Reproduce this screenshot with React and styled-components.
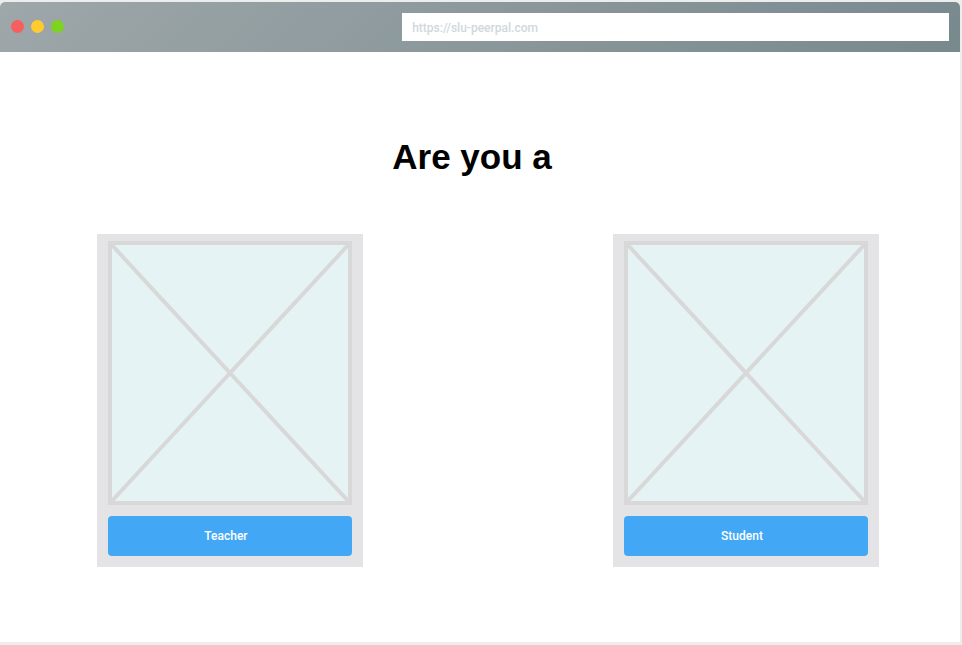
import React from "react";
import styled, { createGlobalStyle } from "styled-components";

const GlobalStyle = createGlobalStyle`
  *, *::before, *::after { box-sizing: border-box; }
  body { margin: 0; background: #ededee; font-family: "Liberation Sans", Arial, sans-serif; }
`;

const Frame = styled.div`
  min-height: 100vh;
  display: flex;
  padding: 2px 2px 3px 0;
`;

const BrowserWindow = styled.div`
  flex: 1;
  min-width: 0;
  display: flex;
  flex-direction: column;
  background: #fff;
  border-radius: 5px 5px 0 0;
  overflow: hidden;
`;

const TitleBar = styled.header`
  height: 50px;
  display: flex;
  align-items: center;
  justify-content: space-between;
  padding: 0 11px;
  background: linear-gradient(135deg, #9ea7aa, #78898d);
`;

const Lights = styled.div`
  display: flex;
  gap: 7px;
  padding-bottom: 1px;
`;

const Light = styled.span`
  width: 13px;
  height: 13px;
  border-radius: 50%;
  background: ${(p) => p.$color};
`;

const AddressInput = styled.input`
  width: calc(60% - 16px);
  height: 28px;
  padding: 2px 10px 0;
  border: 0;
  border-radius: 0;
  outline: 0;
  background: #fff;
  color: #cfd8dc;
  font: 500 12px/20px Roboto, sans-serif;
`;

const Main = styled.main`
  flex: 1;
  padding: 84px 81px 74px 97px;
`;

const Title = styled.h1`
  margin: 0 0 56px;
  padding-right: 32px;
  text-align: center;
  font-size: 35px;
  line-height: 42px;
  font-weight: 700;
  color: #000;
`;

const Choices = styled.div`
  display: flex;
  flex-wrap: wrap;
  justify-content: space-between;
  gap: 32px;
`;

const Card = styled.section`
  width: 266px;
  display: flex;
  flex-direction: column;
  gap: 11px;
  padding: 7px 11px 11px;
  background: #e4e4e6;
`;

const Placeholder = styled.svg`
  display: block;
  width: 100%;
  height: 264px;
  border: 4px solid #d8d8d8;
  background: #e5f3f4;
  stroke: #d8d8d8;
  stroke-width: 4;
`;

const RoleButton = styled.button`
  height: 40px;
  padding: 0 8px 0 0;
  border: 0;
  border-radius: 4px;
  background: #42a8f6;
  color: #fff;
  font: 500 12px/20px Roboto, sans-serif;
  cursor: pointer;
`;

function RoleCard({ role }) {
  return (
    <Card>
      <Placeholder viewBox="0 0 236 256" preserveAspectRatio="none" aria-hidden="true">
        <path d="M-2 -2L238 258M238 -2L-2 258" />
      </Placeholder>
      <RoleButton type="button">{role}</RoleButton>
    </Card>
  );
}

export default function App() {
  return (
    <Frame>
      <GlobalStyle />
      <BrowserWindow>
        <TitleBar>
          <Lights>
            <Light $color="#f65f5f" />
            <Light $color="#ffcb2f" />
            <Light $color="#7ed321" />
          </Lights>
          <AddressInput type="text" aria-label="Address" defaultValue="https://slu-peerpal.com" />
        </TitleBar>
        <Main>
          <Title>Are you a</Title>
          <Choices>
            <RoleCard role="Teacher" />
            <RoleCard role="Student" />
          </Choices>
        </Main>
      </BrowserWindow>
    </Frame>
  );
}
